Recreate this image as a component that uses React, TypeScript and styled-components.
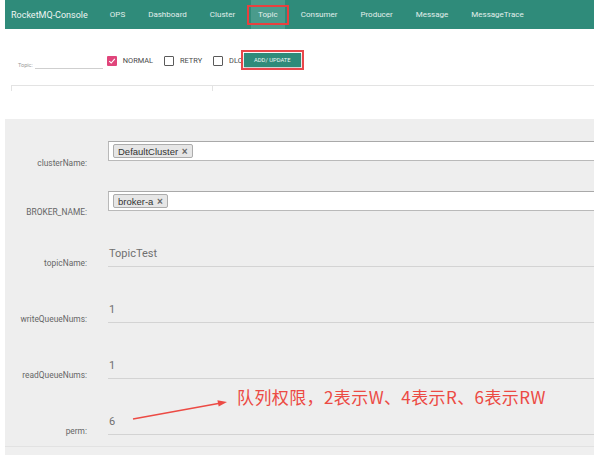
import styled, { createGlobalStyle } from "styled-components";

const GlobalStyle = createGlobalStyle`
  html, body {
    margin: 0;
    padding: 0;
    background: #ffffff;
  }
  body {
    font-family: Roboto, "Liberation Sans", sans-serif;
  }
`;

const navItems = [
  "OPS",
  "Dashboard",
  "Cluster",
  "Topic",
  "Consumer",
  "Producer",
  "Message",
  "MessageTrace",
];

const types = [
  { name: "NORMAL", checked: true },
  { name: "RETRY", checked: false },
  { name: "DLQ", checked: false },
];

const textFields = [
  { label: "topicName:", value: "TopicTest" },
  { label: "writeQueueNums:", value: "1" },
  { label: "readQueueNums:", value: "1" },
  { label: "perm:", value: "6" },
];

const App = () => {
  return (
    <Page>
      <GlobalStyle />
      <Header>
        <Brand>RocketMQ-Console</Brand>
        <Nav>
          {navItems.map((item) => (
            <NavItem key={item} $active={item === "Topic"}>
              {item}
            </NavItem>
          ))}
        </Nav>
      </Header>

      <Toolbar>
        <TopicField>
          <TinyLabel>Topic:</TinyLabel>
          <LineInput />
        </TopicField>
        {types.map((t) => (
          <CheckItem key={t.name}>
            <CheckBox $checked={t.checked}>
              {t.checked && (
                <svg width="8" height="8" viewBox="0 0 8 8">
                  <path d="M1.2 4.2 L3.2 6 L6.8 1.8" fill="none" stroke="#fff" strokeWidth="1.1" />
                </svg>
              )}
            </CheckBox>
            <CheckText>{t.name}</CheckText>
          </CheckItem>
        ))}
        <ActionButton>ADD/ UPDATE</ActionButton>
      </Toolbar>

      <TableHead>
        <HeadCell $width={200} />
        <HeadCell />
      </TableHead>

      <Panel>
        <FormRow $height={20}>
          <FieldLabel $drop={7}>clusterName:</FieldLabel>
          <SelectBox>
            <Tag>
              DefaultCluster <TagClose>×</TagClose>
            </Tag>
          </SelectBox>
        </FormRow>
        <FormRow $height={20} $top={30}>
          <FieldLabel $drop={6}>BROKER_NAME:</FieldLabel>
          <SelectBox>
            <Tag>
              broker-a <TagClose>×</TagClose>
            </Tag>
          </SelectBox>
        </FormRow>
        {textFields.map((f) => (
          <FormRow key={f.label} $height={56}>
            <FieldLabel $drop={1}>{f.label}</FieldLabel>
            <TextValue>{f.value}</TextValue>
          </FormRow>
        ))}
        <Footer />

        <Note>队列权限，2表示W、4表示R、6表示RW</Note>
        <Arrow width="110" height="30" viewBox="0 0 110 30">
          <line x1="8" y1="25" x2="96" y2="9" stroke="#ec4a44" strokeWidth="1.4" />
          <polygon points="102,8 93.7,12.6 92.4,6.2" fill="#ec4a44" />
        </Arrow>
      </Panel>
    </Page>
  );
};

const Page = styled.div`
  width: 589px;
  padding: 0 11px 0 5px;
`;

const Header = styled.div`
  height: 29px;
  background: #2f8b7a;
  display: flex;
  align-items: stretch;
  padding-left: 6px;
`;

const Brand = styled.div`
  display: flex;
  align-items: center;
  color: #eef5f3;
  font-size: 9px;
  margin-right: 15px;
`;

const Nav = styled.div`
  display: flex;
  align-items: stretch;
  gap: 9px;
`;

const NavItem = styled.div<{ $active?: boolean }>`
  position: relative;
  display: flex;
  align-items: center;
  padding: 0 7px;
  font-size: 8px;
  color: #e2efec;
  background: ${(p) => (p.$active ? "#4a9b8c" : "transparent")};

  &::after {
    content: "";
    display: ${(p) => (p.$active ? "block" : "none")};
    position: absolute;
    left: -4px;
    right: -4px;
    top: 5px;
    bottom: 4px;
    border: 2px solid #e8403f;
  }
`;

const Toolbar = styled.div`
  height: 56px;
  box-sizing: border-box;
  padding-top: 23px;
  padding-left: 13px;
  display: flex;
  align-items: flex-start;
`;

const TopicField = styled.div`
  display: flex;
  align-items: flex-end;
  height: 17px;
  margin-right: 4px;
`;

const TinyLabel = styled.span`
  font-size: 5.5px;
  color: #999;
  line-height: 8px;
  margin-right: 2px;
`;

const LineInput = styled.div`
  width: 68px;
  height: 14px;
  border-bottom: 1px solid #cfcfcf;
`;

const CheckItem = styled.div`
  display: flex;
  align-items: center;
  height: 15px;
  margin-top: 1px;
  margin-right: 11px;
  &:last-of-type {
    margin-right: 0;
  }
`;

const CheckBox = styled.span<{ $checked?: boolean }>`
  box-sizing: border-box;
  width: 10px;
  height: 10px;
  display: flex;
  align-items: center;
  justify-content: center;
  border: ${(p) => (p.$checked ? "none" : "1.3px solid #5a5a5a")};
  background: ${(p) => (p.$checked ? "#e0457b" : "#fff")};
  border-radius: 1px;
  margin-right: 6px;
`;

const CheckText = styled.span`
  font-size: 7.4px;
  color: #4a4a4a;
`;

const ActionButton = styled.button`
  margin: 1px 0 0 1px;
  width: 57px;
  height: 14px;
  padding: 0;
  border: none;
  background: #2f8b7a;
  color: #f2f7f6;
  font-family: Roboto, sans-serif;
  font-size: 5.8px;
  outline: 2px solid #e8474b;
  outline-offset: 1px;
  box-shadow: 0 1px 2px rgba(0, 0, 0, 0.25);
`;

const TableHead = styled.div`
  margin-left: 6px;
  display: flex;
  height: 5px;
  border-top: 1px solid #e3e3e3;
`;

const HeadCell = styled.div<{ $width?: number }>`
  width: ${(p) => (p.$width ? `${p.$width}px` : "auto")};
  flex: ${(p) => (p.$width ? "none" : "1")};
  border-left: 1px solid #e3e3e3;
`;

const Panel = styled.div`
  position: relative;
  margin-top: 28px;
  background: #eeeeee;
  padding-top: 22px;
`;

const FormRow = styled.div<{ $height: number; $top?: number }>`
  display: flex;
  align-items: flex-end;
  height: ${(p) => p.$height}px;
  margin-top: ${(p) => p.$top ?? 0}px;
`;

const FieldLabel = styled.div<{ $drop: number }>`
  width: 82px;
  flex: none;
  text-align: right;
  font-size: 8.4px;
  line-height: 10px;
  color: #666;
  margin-bottom: ${(p) => -p.$drop}px;
  margin-right: 21px;
`;

const SelectBox = styled.div`
  flex: 1;
  box-sizing: border-box;
  height: 20px;
  background: #fff;
  border: 1px solid #b9b9b9;
  border-top-color: #a9a9a9;
  border-right: none;
  display: flex;
  align-items: center;
  padding-left: 4px;
`;

const Tag = styled.span`
  display: inline-flex;
  align-items: center;
  height: 14px;
  box-sizing: border-box;
  padding: 0 4px;
  background: #e6e6e6;
  border: 1px solid #acacac;
  border-radius: 2px;
  font-family: "Liberation Sans", Arial, sans-serif;
  font-size: 9.5px;
  color: #333;
  white-space: pre;
`;

const TagClose = styled.span`
  font-weight: bold;
  color: #666;
  font-size: 10px;
  margin-left: 1px;
`;

const TextValue = styled.div`
  flex: 1;
  height: 26px;
  box-sizing: border-box;
  display: flex;
  align-items: center;
  padding-left: 1px;
  border-bottom: 1.5px solid #d3d3d3;
  font-size: 11px;
  color: #707070;
`;

const Footer = styled.div`
  margin-top: 11px;
  height: 8px;
  border-top: 1px solid #e2e2e2;
  background: #efefef;
`;

const Note = styled.div`
  position: absolute;
  left: 232px;
  top: 268px;
  font-family: "Noto Sans CJK SC", sans-serif;
  font-size: 17px;
  line-height: 20px;
  color: #ec4a44;
  letter-spacing: 0.4px;
  white-space: nowrap;
`;

const Arrow = styled.svg`
  position: absolute;
  left: 120px;
  top: 275px;
`;

export default App;
